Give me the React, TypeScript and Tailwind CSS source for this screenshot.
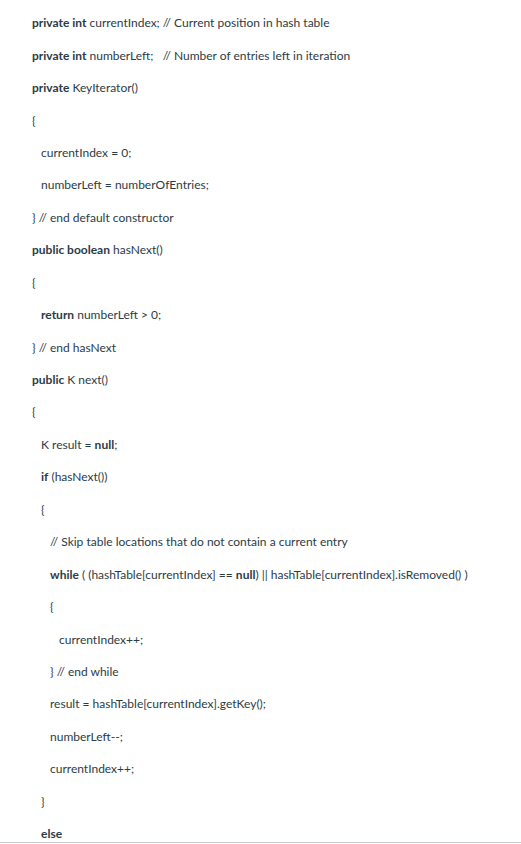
type Seg = { t: string; b?: boolean };
type Line = { indent: number; segs: Seg[] };

const L = (indent: number, ...segs: (string | [string])[]): Line => ({
  indent,
  segs: segs.map((s) => (typeof s === 'string' ? { t: s } : { t: s[0], b: true })),
});

const lines: Line[] = [
  L(0, ['private int'], ' currentIndex; // Current position in hash table'),
  L(0, ['private int'], ' numberLeft;\u00a0\u00a0 // Number of entries left in iteration'),
  L(0, ['private'], ' KeyIterator()'),
  L(0, '{'),
  L(1, 'currentIndex = 0;'),
  L(1, 'numberLeft = numberOfEntries;'),
  L(0, '} // end default constructor'),
  L(0, ['public boolean'], ' hasNext()'),
  L(0, '{'),
  L(1, ['return'], ' numberLeft > 0;'),
  L(0, '} // end hasNext'),
  L(0, ['public'], ' K next()'),
  L(0, '{'),
  L(1, 'K result = ', ['null'], ';'),
  L(1, ['if'], ' (hasNext())'),
  L(1, '{'),
  L(2, '// Skip table locations that do not contain a current entry'),
  L(2, ['while'], ' ( (hashTable[currentIndex] == ', ['null'], ') || hashTable[currentIndex].isRemoved() )'),
  L(2, '{'),
  L(3, 'currentIndex++;'),
  L(2, '} // end while'),
  L(2, 'result = hashTable[currentIndex].getKey();'),
  L(2, 'numberLeft--;'),
  L(2, 'currentIndex++;'),
  L(1, '}'),
  L(1, ['else']),
];

const indentClass = ['pl-0', 'pl-[9px]', 'pl-[18px]', 'pl-[27px]'];

export default function App() {
  return (
    <div className="h-[844px] w-[521px] overflow-hidden bg-white font-['Lato','Liberation_Sans',sans-serif] text-[12px] text-[#2d3b45]">
      <div className="flex h-[843px] flex-col border-b border-[#c7cdd1] px-[32px] pt-[7px]">
        {lines.map((line, i) => (
          <div key={i} className={`flex h-[32.44px] shrink-0 items-center whitespace-pre ${indentClass[line.indent]}`}>
            <span>
              {line.segs.map((s, j) =>
                s.b ? (
                  <span key={j} className="font-bold">
                    {s.t}
                  </span>
                ) : (
                  <span key={j}>{s.t}</span>
                )
              )}
            </span>
          </div>
        ))}
      </div>
    </div>
  );
}
